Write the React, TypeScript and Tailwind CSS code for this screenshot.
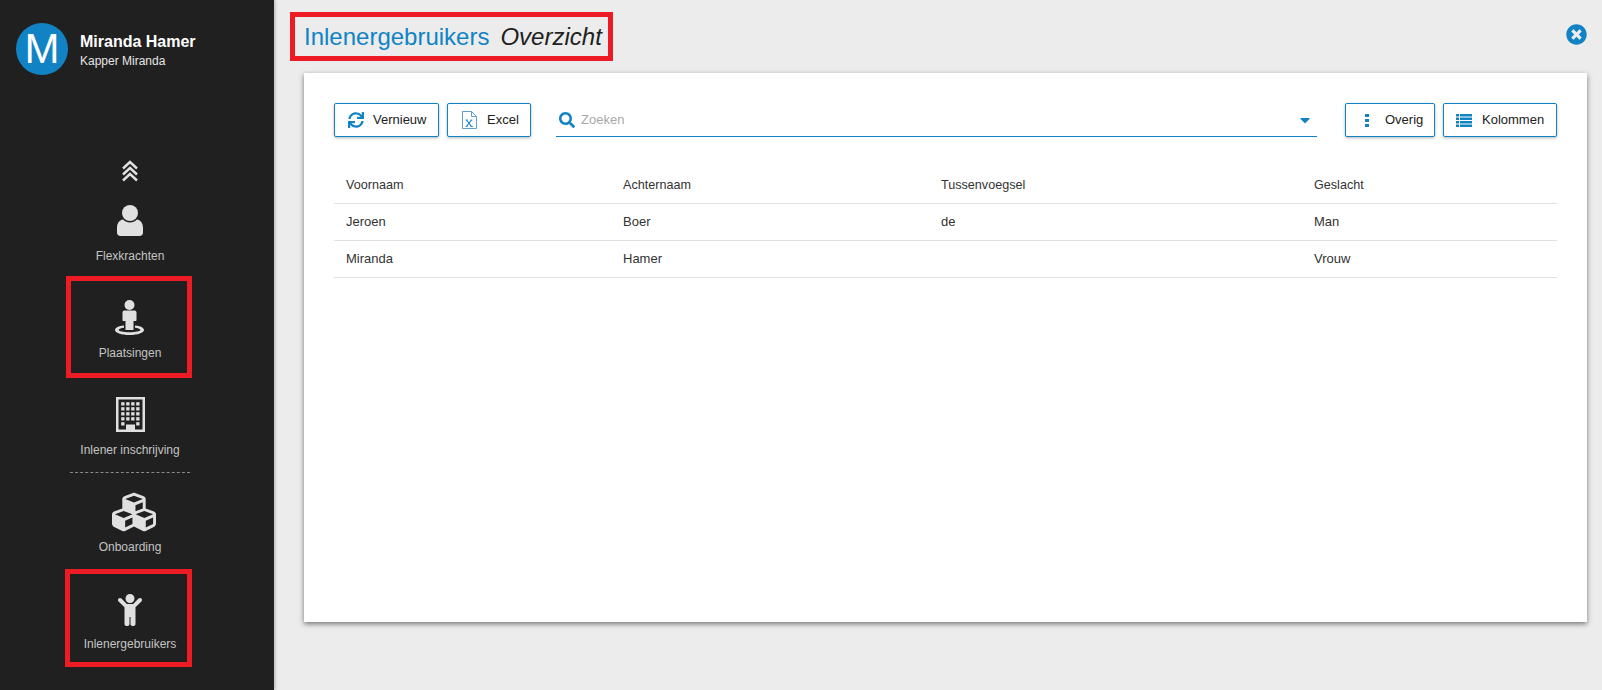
import { FaCaretDown, FaChild, FaCubes, FaSearch, FaSync, FaTimesCircle } from "react-icons/fa";
import type { ReactNode } from "react";

function ChevronsUp() {
  return (
    <svg width="18" height="22" viewBox="0 0 18 22" fill="none" stroke="#e0e0e0" strokeWidth="2.4">
      <path d="M2 8.5 9 2l7 6.5" />
      <path d="M2 14.5 9 8l7 6.5" />
      <path d="M2 20.5 9 14l7 6.5" />
    </svg>
  );
}

function UserIcon() {
  return (
    <svg width="26" height="31" viewBox="0 0 26 31" fill="#e0e0e0">
      <circle cx="13" cy="8" r="8" />
      <path d="M6 14.500c1.800 1.800 4.300 3 7 3s5.200-1.200 7-3c3.800.6 6 4 6 8.500v4.500c0 2.200-1.300 3.500-3.500 3.500h-19C1.300 31 0 29.700 0 27.500V23c0-4.500 2.200-7.900 6-8.500z" />
    </svg>
  );
}

function PlacementIcon() {
  return (
    <svg width="29" height="35" viewBox="0 0 29 35" fill="#e0e0e0" className="-ml-[2px]">
      <circle cx="14.500" cy="5" r="5" />
      <path d="M9.500 10.500h10c1.200 0 2 .8 2 2V20c0 .6-.4 1-1 1H18.500v9h-8v-9H8.500c-.6 0-1-.4-1-1v-7.500c0-1.200.8-2 2-2z" />
      <path d="M9 25.500C3.500 26 0 27.800 0 30c0 2.800 6.300 5 14.500 5S29 32.800 29 30c0-2.200-3.500-4-9-4.500v2.300c3.200.4 5.400 1.200 5.400 2.200 0 1.200-4.800 2.200-10.900 2.200S3.600 31.200 3.600 30c0-1 2.200-1.800 5.400-2.200z" />
    </svg>
  );
}

function BuildingIcon() {
  const xs = [5.2, 10.2, 15.2, 20.2];
  const ys = [5.2, 10.2, 15.2, 20.2, 25.2];
  return (
    <svg width="29" height="35" viewBox="0 0 29 35">
      <path fill="#e0e0e0" d="M0 0h29v35H0z" />
      <path fill="#202020" d="M2.500 2.500h24v30h-24z" />
      {ys.map((y, r) =>
        xs.map((x, c) =>
          r === 4 && (c === 1 || c === 2) ? null : <rect key={`${r}-${c}`} x={x} y={y} width="3.300" height="3.300" fill="#e0e0e0" />,
        ),
      )}
      <path fill="#e0e0e0" d="M10 27.500h9V35h-9z" />
    </svg>
  );
}

function ExcelIcon() {
  return (
    <svg width="15" height="18" viewBox="0 0 15 18" fill="none" stroke="#5f9fd0" strokeWidth="1">
      <path d="M.5.5h9l5 5v12H.5z" />
      <path d="M9.500.5v5h5" />
      <path d="m4.500 9 5 6.500M9.500 9l-5 6.500" stroke="#1183c4" strokeWidth="1.200" />
      <path d="M3.500 9h2.500M8.500 9h2M3.500 15.500h2M8.500 15.500h2.500" stroke="#1183c4" strokeWidth=".8" />
    </svg>
  );
}

function DotsIcon() {
  return (
    <svg width="4" height="13" viewBox="0 0 4 13" fill="#1183c4">
      <path d="M0 0h4v3H0zM0 5h4v3H0zM0 10h4v3H0z" />
    </svg>
  );
}

function ColumnsIcon() {
  return (
    <svg width="16" height="13" viewBox="0 0 16 13" fill="#1183c4">
      <path d="M0 0h3v2.500H0zM4 0h12v2.500H4zM0 3.500h3V6H0zM4 3.500h12V6H4zM0 7h3v2.500H0zM4 7h12v2.500H4zM0 10.500h3V13H0zM4 10.500h12V13H4z" />
    </svg>
  );
}

function NavItem({ icon, label, mark, className }: { icon: ReactNode; label: string; mark?: string; className?: string }) {
  return (
    <div className={["relative flex w-[120px] flex-col items-center", className ?? "h-[97px]"].join(" ")}>
      <div className="flex h-[64px] w-full items-center justify-center pt-[7px]">{icon}</div>
      <div className="text-center text-[12px] leading-[14px] whitespace-nowrap text-[#c4c4c4]">{label}</div>
      {mark && <div className={["absolute border-[5px] border-[#ed1c24]", mark].join(" ")} />}
    </div>
  );
}

function Sidebar() {
  return (
    <aside className="flex w-[274px] shrink-0 flex-col bg-[#202020] shadow-[2px_0_2px_rgba(0,0,0,0.15)]">
      <div className="flex items-start gap-3 pt-[23px] pl-[16px]">
        <div className="flex h-[52px] w-[52px] items-center justify-center rounded-full bg-[#1183c4] text-[42px] leading-none text-white">M</div>
        <div className="mt-[9px]">
          <div className="text-[16px] leading-[20px] font-bold text-white">Miranda Hamer</div>
          <div className="mt-[1px] text-[12px] leading-[16px] text-[#e6e6e6]">Kapper Miranda</div>
        </div>
      </div>
      <div className="flex w-[260px] flex-col items-center pt-[85px]">
        <ChevronsUp />
      </div>
      <nav className="flex w-[190px] flex-col self-start pt-[3px] pl-[70px]">
        <NavItem icon={<UserIcon />} label="Flexkrachten" />
        <NavItem icon={<PlacementIcon />} label="Plaatsingen" mark="-top-[6px] -right-[2px] bottom-[1px] -left-[4px]" />
        <NavItem icon={<BuildingIcon />} label="Inlener inschrijving" className="h-[94px] border-b border-dashed border-[#8a8a8a]" />
        <NavItem icon={<FaCubes size={44} color="#e0e0e0" className="mt-[1px] ml-[8px]" />} label="Onboarding" className="h-[100px] pt-[3px]" />
        <NavItem icon={<FaChild size={32} color="#e0e0e0" className="mt-[3px]" />} label="Inlenergebruikers" mark="-top-[4px] -right-[2px] bottom-[3px] -left-[5px]" />
      </nav>
    </aside>
  );
}

function ToolButton({ icon, label, className }: { icon: ReactNode; label: string; className: string }) {
  return (
    <button className={["flex h-[34px] items-center rounded-[2px] border border-[#1183c4] bg-white text-[13px] text-[#212121] shadow-[0_1px_3px_rgba(0,0,0,0.3)]", className].join(" ")}>
      {icon}
      {label}
    </button>
  );
}

const rows = [
  ["Jeroen", "Boer", "de", "Man"],
  ["Miranda", "Hamer", "", "Vrouw"],
];

const colClass = ["w-[277px]", "w-[318px]", "w-[373px]", "flex-1"];

function Table() {
  return (
    <div className="mt-[30px] text-[13px] text-[#333]">
      <div className="flex h-[37px] items-center border-b border-[#e0e0e0] px-[12px] text-[12.600px] text-[#333]">
        {["Voornaam", "Achternaam", "Tussenvoegsel", "Geslacht"].map((h, i) => (
          <div key={h} className={colClass[i]}>{h}</div>
        ))}
      </div>
      {rows.map((r) => (
        <div key={r[0]} className="flex h-[37px] items-center border-b border-[#e0e0e0] px-[12px]">
          {r.map((c, i) => (
            <div key={i} className={colClass[i]}>{c}</div>
          ))}
        </div>
      ))}
    </div>
  );
}

export default function App() {
  return (
    <div className="flex h-[690px] w-[1602px] overflow-hidden bg-[#ececec] font-['Liberation_Sans',sans-serif]">
      <Sidebar />
      <main className="flex min-w-0 flex-1 flex-col">
        <header className="flex h-[73px] items-start justify-between pt-[12px] pr-[15px] pl-[16px]">
          <div className="flex h-[49px] w-[323px] items-center border-[5px] border-[#ed1c24] pl-[9px] text-[24px]">
            <span className="text-[#1183c4]">Inlenergebruikers</span>
            <span className="ml-[11px] text-[#212121] italic">Overzicht</span>
          </div>
          <FaTimesCircle size={21} color="#1183c4" className="mt-[12px]" />
        </header>
        <section className="mr-[15px] ml-[30px] h-[549px] bg-white px-[30px] pt-[30px] shadow-[0_2px_5px_rgba(0,0,0,0.5)]">
          <div className="flex items-center">
            <ToolButton icon={<FaSync size={16} color="#1183c4" className="mr-[9px]" />} label="Vernieuw" className="w-[105px] pl-[13px]" />
            <ToolButton icon={<span className="mr-[10px]"><ExcelIcon /></span>} label="Excel" className="ml-[8px] w-[84px] pl-[14px]" />
            <div className="mr-[28px] ml-[25px] flex h-[34px] flex-1 items-center border-b border-[#1183c4] pt-[1px] pr-[4px] text-[13px] text-[#a8a8a8]">
              <FaSearch size={16} color="#1183c4" className="mr-[6px] ml-[3px]" />
              <span className="flex-1">Zoeken</span>
              <FaCaretDown size={16} color="#1183c4" />
            </div>
            <ToolButton icon={<span className="mr-[16px]"><DotsIcon /></span>} label="Overig" className="w-[90px] pl-[19px]" />
            <ToolButton icon={<span className="mr-[10px]"><ColumnsIcon /></span>} label="Kolommen" className="ml-[8px] w-[114px] pl-[12px]" />
          </div>
          <Table />
        </section>
      </main>
    </div>
  );
}
